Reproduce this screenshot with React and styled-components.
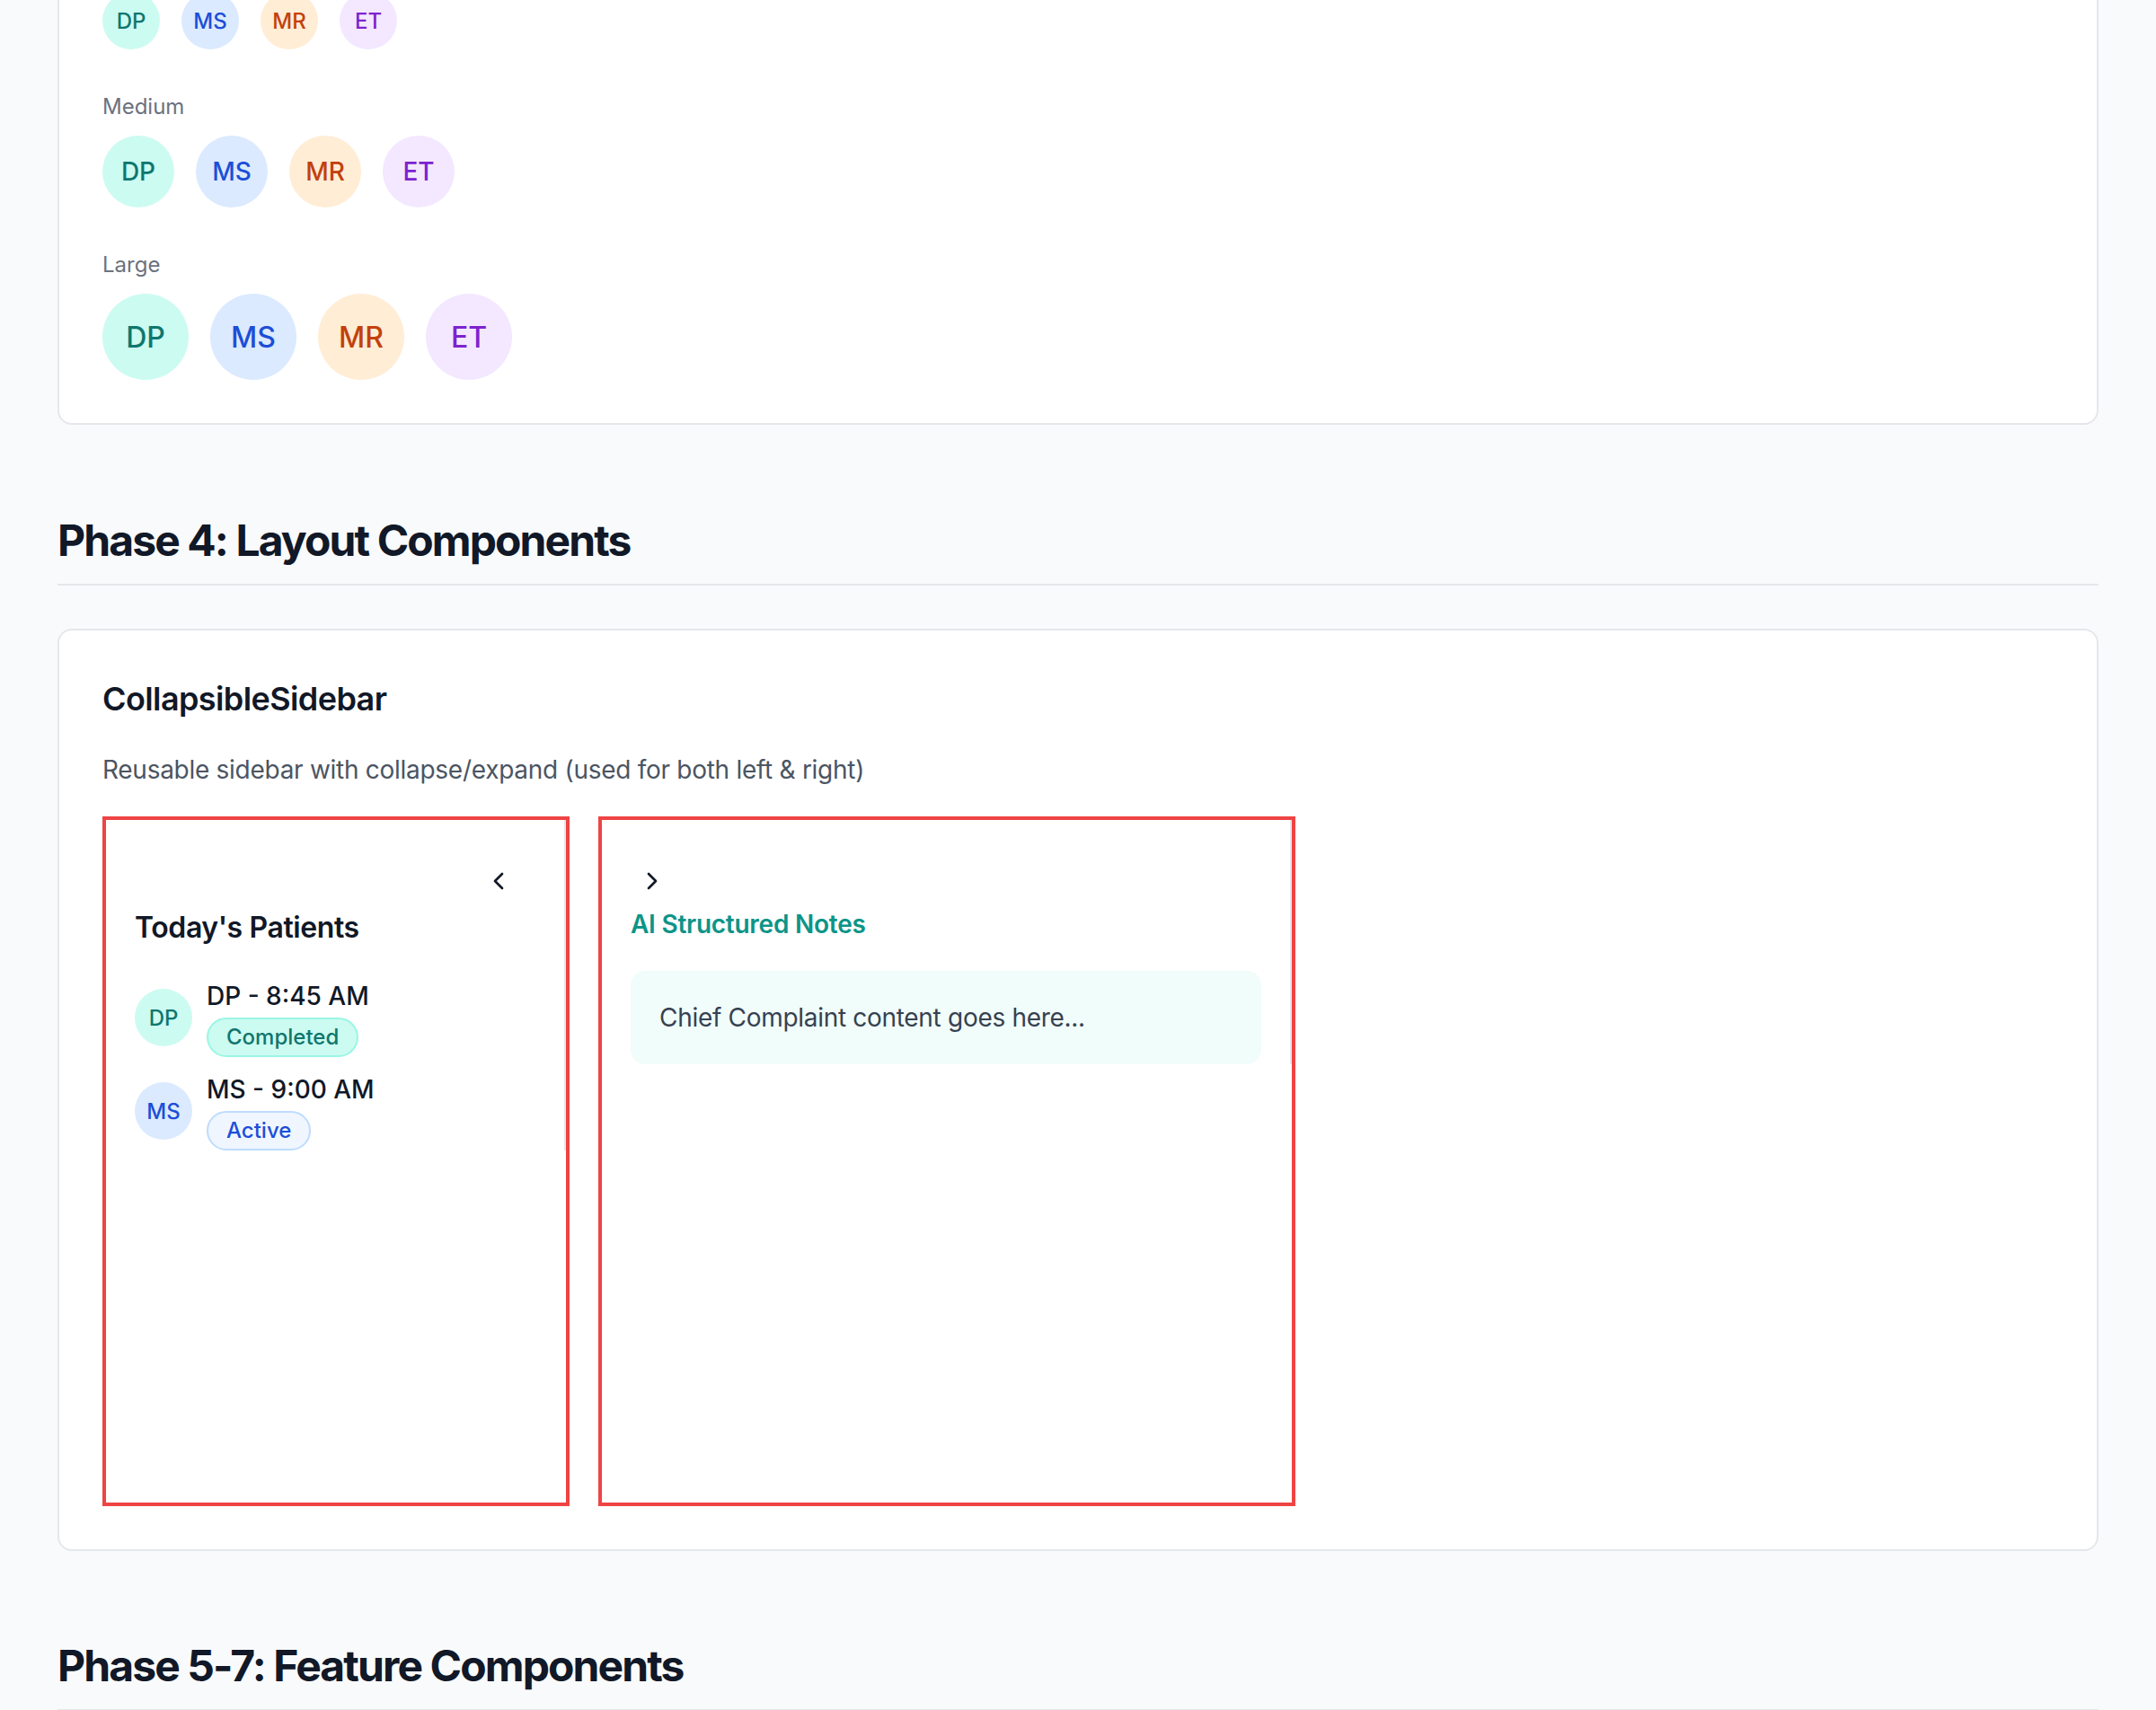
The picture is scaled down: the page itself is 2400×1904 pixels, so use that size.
import React from 'react'
import styled, { createGlobalStyle } from 'styled-components'
import { ChevronLeft, ChevronRight } from 'lucide-react'

const GlobalStyle = createGlobalStyle`
  html, body {
    margin: 0;
    padding: 0;
    background: #f9fafb;
  }
  body {
    font-family: Inter, "Noto Sans", "Liberation Sans", sans-serif;
    color: #111827;
    -webkit-font-smoothing: antialiased;
  }
`

const Page = styled.div`
  margin-top: -107px;
  padding: 0 64px;
`

const SectionHeading = styled.h2`
  margin: 0 0 48px;
  padding-bottom: 16px;
  border-bottom: 2px solid #e5e7eb;
  font-size: 48px;
  line-height: 64px;
  font-weight: 700;
  letter-spacing: -1.9px;
  color: #111827;
`

const Card = styled.div`
  background: #ffffff;
  border: 2px solid #e5e7eb;
  border-radius: 16px;
  padding: 48px;
  margin-bottom: ${p => p.$gap || 96}px;
`

const Groups = styled.div`
  display: flex;
  flex-direction: column;
  gap: 48px;
`

const GroupLabel = styled.div`
  font-size: 24px;
  line-height: 32px;
  color: #6b7280;
  margin-bottom: 16px;
`

const AvatarRow = styled.div`
  display: flex;
  gap: 24px;
`

const tones = {
  teal: { bg: '#ccfbf1', fg: '#0f766e' },
  blue: { bg: '#dbeafe', fg: '#1d4ed8' },
  orange: { bg: '#ffedd5', fg: '#c2410c' },
  purple: { bg: '#f3e8ff', fg: '#7e22ce' },
}

const sizes = {
  sm: { box: 64, font: 24 },
  md: { box: 80, font: 28 },
  lg: { box: 96, font: 32 },
}

const Avatar = styled.div`
  flex-shrink: 0;
  width: ${p => sizes[p.$size].box}px;
  height: ${p => sizes[p.$size].box}px;
  border-radius: 50%;
  display: flex;
  align-items: center;
  justify-content: center;
  background: ${p => tones[p.$tone].bg};
  color: ${p => tones[p.$tone].fg};
  font-size: ${p => sizes[p.$size].font}px;
  font-weight: 500;
`

const CardTitle = styled.h3`
  margin: 0 0 31px;
  font-size: 36px;
  line-height: 56px;
  font-weight: 600;
  letter-spacing: -0.6px;
  color: #111827;
`

const CardText = styled.p`
  margin: 0 0 32px;
  font-size: 28px;
  line-height: 40px;
  letter-spacing: -0.28px;
  color: #4b5563;
`

const Demo = styled.div`
  display: flex;
  gap: 32px;
`

const Frame = styled.div`
  height: 768px;
  box-sizing: border-box;
  border: 4px solid #ef4444;
`

const Sidebar = styled.aside`
  width: ${p => p.$width}px;
  box-sizing: border-box;
  padding: 0 32px;
  border-right: 2px solid #e5e7eb;
  background: #ffffff;
`

const SidebarHeader = styled.div`
  display: flex;
  justify-content: ${p => (p.$side === 'left' ? 'flex-end' : 'flex-start')};
  padding-top: 44px;
  padding-right: ${p => (p.$side === 'left' ? 17 : 0)}px;
`

const ToggleButton = styled.button`
  width: 48px;
  height: 48px;
  padding: 8px;
  border: none;
  border-radius: 8px;
  background: transparent;
  color: #111827;
  display: flex;
  align-items: center;
  justify-content: center;
  cursor: pointer;
`

const PanelTitle = styled.h4`
  margin: 4px 0 32px;
  font-size: ${p => (p.$accent ? 28 : 32)}px;
  line-height: ${p => (p.$accent ? 40 : 48)}px;
  font-weight: 600;
  letter-spacing: ${p => (p.$accent ? -0.25 : -0.4)}px;
  color: ${p => (p.$accent ? '#0d9488' : '#111827')};
`

const PatientList = styled.div`
  display: flex;
  flex-direction: column;
  gap: 16px;
`

const PatientRow = styled.div`
  display: flex;
  align-items: center;
  gap: 16px;
`

const PatientInfo = styled.div`
  display: flex;
  flex-direction: column;
  align-items: flex-start;
`

const PatientName = styled.div`
  font-size: 28px;
  line-height: 40px;
  font-weight: 500;
  color: #111827;
`

const badgeTones = {
  completed: { bg: '#ccfbf1', border: '#99f6e4', fg: '#0f766e' },
  active: { bg: '#eff6ff', border: '#bfdbfe', fg: '#1d4ed8' },
}

const Badge = styled.span`
  margin-top: 4px;
  display: inline-flex;
  padding: 4px 20px;
  border-radius: 999px;
  border: 2px solid ${p => badgeTones[p.$tone].border};
  background: ${p => badgeTones[p.$tone].bg};
  color: ${p => badgeTones[p.$tone].fg};
  font-size: 24px;
  line-height: 32px;
  font-weight: 500;
`

const NoteBox = styled.div`
  background: #f0fdfa;
  border-radius: 16px;
  padding: 32px;
  font-size: 28px;
  line-height: 40px;
  letter-spacing: -0.3px;
  color: #374151;
`

const avatarSet = [
  { initials: 'DP', tone: 'teal' },
  { initials: 'MS', tone: 'blue' },
  { initials: 'MR', tone: 'orange' },
  { initials: 'ET', tone: 'purple' },
]

const sizeGroups = [
  { label: 'Small', size: 'sm' },
  { label: 'Medium', size: 'md' },
  { label: 'Large', size: 'lg' },
]

const patients = [
  { initials: 'DP', tone: 'teal', time: '8:45 AM', status: 'Completed', badge: 'completed' },
  { initials: 'MS', tone: 'blue', time: '9:00 AM', status: 'Active', badge: 'active' },
]

export default function App() {
  return (
    <>
      <GlobalStyle />
      <Page>
        <Card $gap={97}>
          <Groups>
            {sizeGroups.map(group => (
              <div key={group.label}>
                <GroupLabel>{group.label}</GroupLabel>
                <AvatarRow>
                  {avatarSet.map(a => (
                    <Avatar key={a.initials} $size={group.size} $tone={a.tone}>
                      {a.initials}
                    </Avatar>
                  ))}
                </AvatarRow>
              </div>
            ))}
          </Groups>
        </Card>

        <SectionHeading>Phase 4: Layout Components</SectionHeading>

        <Card>
          <CardTitle>CollapsibleSidebar</CardTitle>
          <CardText>Reusable sidebar with collapse/expand (used for both left &amp; right)</CardText>
          <Demo>
            <Frame>
              <Sidebar $width={512}>
                <SidebarHeader $side="left">
                  <ToggleButton aria-label="Collapse">
                    <ChevronLeft size={32} strokeWidth={2} />
                  </ToggleButton>
                </SidebarHeader>
                <PanelTitle>Today's Patients</PanelTitle>
                <PatientList>
                  {patients.map(p => (
                    <PatientRow key={p.initials}>
                      <Avatar $size="sm" $tone={p.tone}>{p.initials}</Avatar>
                      <PatientInfo>
                        <PatientName>{p.initials} - {p.time}</PatientName>
                        <Badge $tone={p.badge}>{p.status}</Badge>
                      </PatientInfo>
                    </PatientRow>
                  ))}
                </PatientList>
              </Sidebar>
            </Frame>
            <Frame>
              <Sidebar $width={768}>
                <SidebarHeader $side="right">
                  <ToggleButton aria-label="Expand">
                    <ChevronRight size={32} strokeWidth={2} />
                  </ToggleButton>
                </SidebarHeader>
                <PanelTitle $accent>AI Structured Notes</PanelTitle>
                <NoteBox>Chief Complaint content goes here...</NoteBox>
              </Sidebar>
            </Frame>
          </Demo>
        </Card>

        <SectionHeading>Phase 5-7: Feature Components</SectionHeading>
      </Page>
    </>
  )
}
